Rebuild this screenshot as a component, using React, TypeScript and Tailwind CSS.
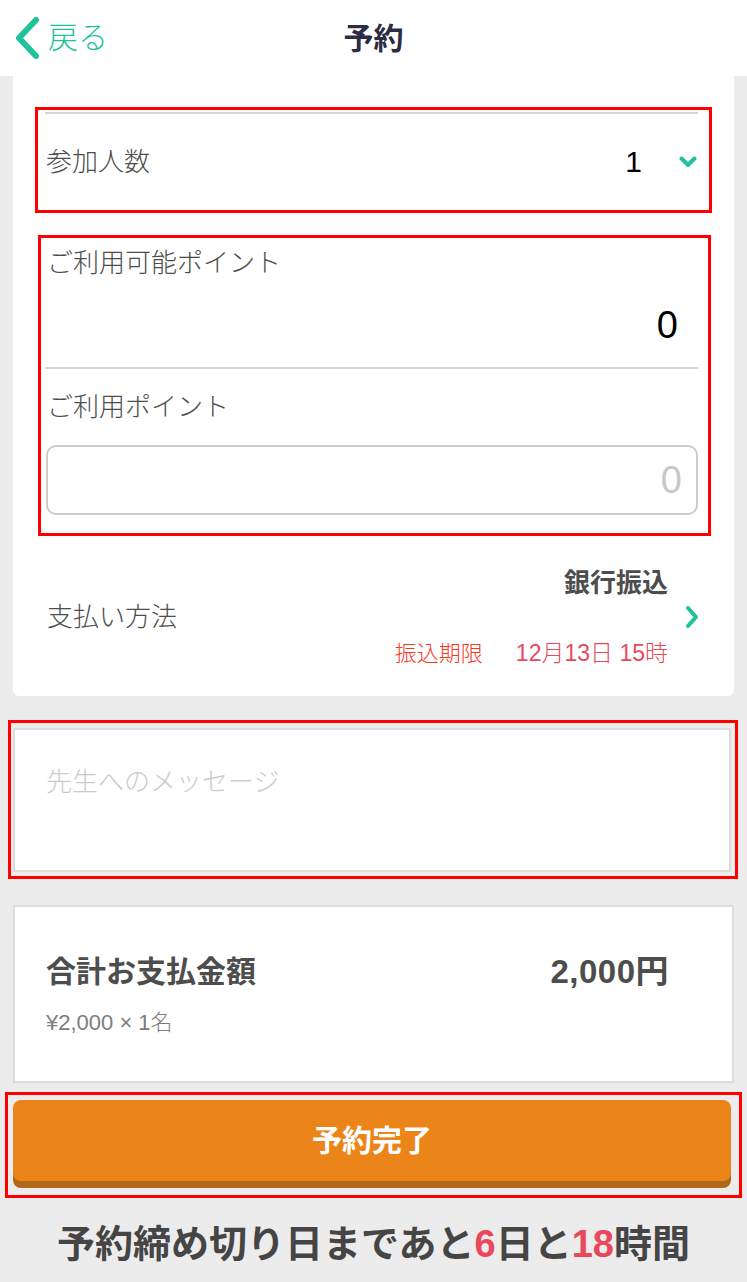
export default function App() {
  return (
    <div className="w-[747px] h-[1282px] overflow-hidden bg-[#ececec] font-['Liberation_Sans','Noto_Sans_CJK_JP',sans-serif] text-[#4d4d4d]">
      <header className="grid h-[76px] grid-cols-3 items-center bg-white">
        <button className="flex items-center pl-[13px] text-[#1ec29b]">
          <svg width="28" height="42" viewBox="0 0 28 42">
            <path
              d="M23 3 L6 21 L23 39"
              fill="none"
              stroke="currentColor"
              strokeWidth="6"
              strokeLinecap="round"
              strokeLinejoin="round"
            />
          </svg>
          <span className="ml-[7px] text-[30px] font-light leading-none">戻る</span>
        </button>
        <h1 className="text-center text-[30px] font-bold text-[#2c2c45]">予約</h1>
        <div />
      </header>

      <div className="mx-[13px] rounded-b-[6px] bg-white pt-[31px] pb-[27px] font-light">
        <div className="ml-[22px] flex h-[106px] w-[677px] flex-col border-[3px] border-[#ff0000]">
          <div className="mt-[2px] ml-[7px] mr-[11px] h-[2px] bg-[#d6d6d6]" />
          <div className="flex flex-1 items-center pl-[8px] pr-[12px]">
            <span className="text-[26px] leading-[36px]">参加人数</span>
            <span className="ml-auto text-[30px] font-normal leading-[36px] text-black">1</span>
            <svg className="ml-[37px]" width="18" height="12" viewBox="0 0 18 12">
              <path
                d="M2.5 2.5 L9 9 L15.5 2.5"
                fill="none"
                stroke="#1ec29b"
                strokeWidth="4"
                strokeLinecap="round"
                strokeLinejoin="round"
              />
            </svg>
          </div>
        </div>

        <div className="mt-[22px] ml-[25px] flex h-[301px] w-[673px] flex-col border-[3px] border-[#ff0000]">
          <div className="flex h-[50px] items-center pl-[6px] text-[26px]">ご利用可能ポイント</div>
          <div className="flex h-[74px] items-center justify-end pr-[30px] text-[38px] font-normal text-black">0</div>
          <div className="ml-[4px] mr-[10px] mt-[5px] h-[2px] bg-[#d6d6d6]" />
          <div className="flex h-[76px] items-center pl-[6px] text-[26px]">ご利用ポイント</div>
          <input
            placeholder="0"
            className="ml-[5px] mr-[10px] h-[70px] rounded-[10px] border-2 border-[#cccccc] px-[14px] text-right text-[38px] outline-none placeholder:text-[#c8c8c8]"
          />
        </div>

        <div className="mt-[29px] flex items-center pl-[34px] pr-[34px]">
          <span className="text-[26px] leading-[36px]">支払い方法</span>
          <div className="ml-auto flex flex-col items-end">
            <span className="text-[26px] font-bold leading-[36px]">銀行振込</span>
            <div className="mt-[37px] flex items-baseline leading-[30px]">
              <span className="text-[22px] text-[#f5391f]">振込期限</span>
              <span className="ml-[33px] text-[23px] text-[#e64a5c]">12月13日 15時</span>
            </div>
          </div>
          <svg className="ml-[16px]" width="16" height="24" viewBox="0 0 16 24">
            <path
              d="M4 3 L12 12 L4 21"
              fill="none"
              stroke="#1ec29b"
              strokeWidth="4"
              strokeLinecap="round"
              strokeLinejoin="round"
            />
          </svg>
        </div>
      </div>

      <div className="mt-[24px] ml-[8px] flex h-[159px] w-[730px] flex-col border-[3px] border-[#ff0000] pt-[5px] pl-[2px] pr-[4px] pb-[4px]">
        <textarea
          placeholder="先生へのメッセージ"
          className="flex-1 resize-none border-2 border-[#dcdcdc] bg-white pl-[31px] pt-[34px] text-[26px] font-light leading-[36px] outline-none placeholder:text-[#cbcbcb]"
        />
      </div>

      <div className="mx-[13px] mt-[26px] h-[178px] border-2 border-[#dddddd] bg-white pl-[31px] pr-[63px] pt-[45px]">
        <div className="flex items-center justify-between font-bold leading-[40px]">
          <span className="text-[30px]">合計お支払金額</span>
          <span className="text-[33px] tracking-[0.5px]">2,000円</span>
        </div>
        <div className="mt-[17px] text-[22px] font-light leading-[28px] text-[#7d7d7d]">¥2,000 × 1名</div>
      </div>

      <div className="mt-[9px] ml-[5px] h-[106px] w-[737px] border-[3px] border-[#ff0000] pt-[5px] pl-[5px]">
        <button className="flex h-[81px] w-[718px] items-center justify-center rounded-[8px] bg-[#ec8519] text-[30px] font-bold text-white shadow-[0_7px_0_#b2681b]">
          予約完了
        </button>
      </div>

      <p className="mt-[22px] text-center text-[38px] font-bold leading-[48px] text-[#454545]">
        予約締め切り日まであと<span className="text-[#e8485a]">6</span>日と
        <span className="text-[#e8485a]">18</span>時間
      </p>
    </div>
  );
}
